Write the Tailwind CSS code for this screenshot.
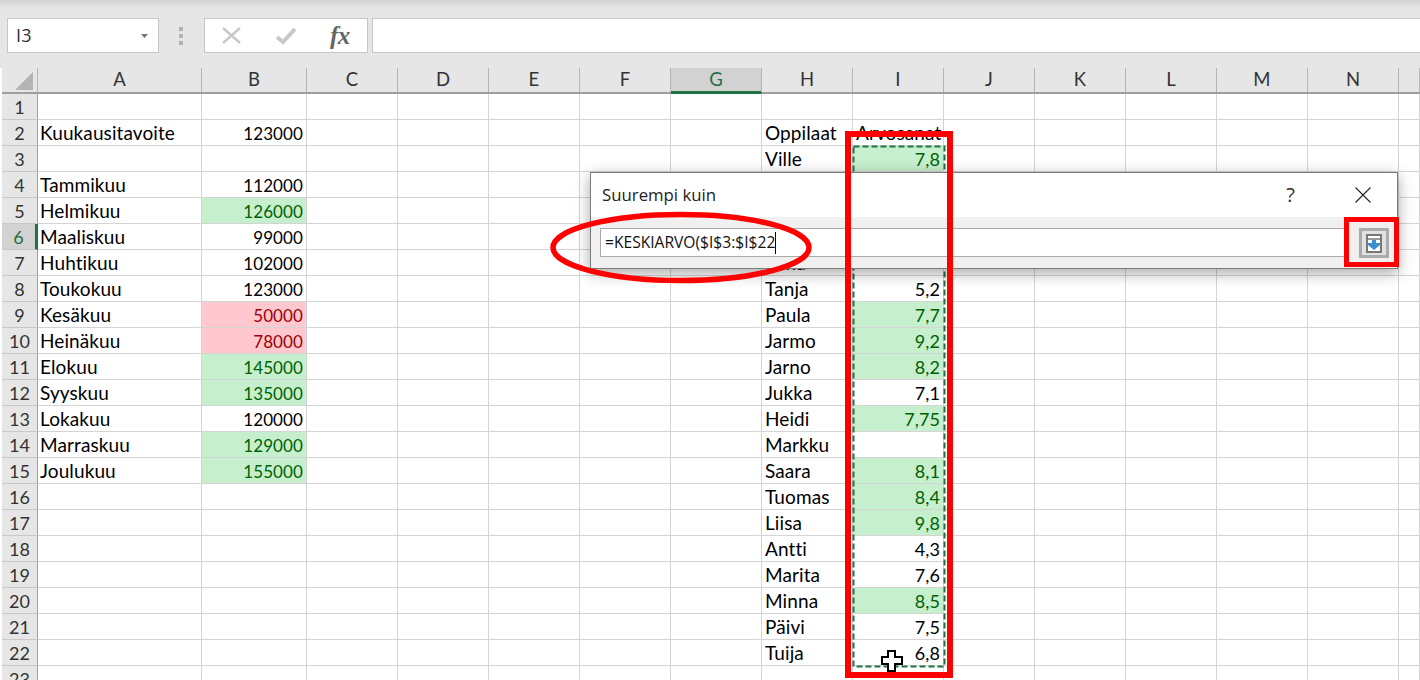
<!DOCTYPE html>
<html lang="fi">
  <head>
    <meta charset="UTF-8" />
    <title>Suurempi kuin</title>
    <script src="https://cdn.jsdelivr.net/npm/@tailwindcss/browser@4"></script>
  </head>
  <body class="bg-white overflow-hidden">
    <div class="relative w-[1420px] h-[680px] overflow-hidden font-['Lato',sans-serif] text-[19px] tracking-[0.1px] text-black">
      <!-- Formula bar -->
      <div class="h-[68px] bg-[#e6e6e6] bg-gradient-to-b from-[#d2d2d2] to-[#e6e6e6] to-[8px] pt-[18px] pl-[7px] flex items-start">
        <div class="w-[152px] h-[35px] bg-white border border-[#c6c6c6] flex items-center justify-between pl-2 pr-[9px] font-['Open_Sans',sans-serif] text-[18px] text-[#333]">
          <span>I3</span>
          <svg width="8" height="4" viewBox="0 0 8 4"><path d="M0 0h7L3.5 4z" fill="#777" /></svg>
        </div>
        <div class="w-[45px] h-[35px] flex flex-col items-center justify-center gap-[3px] pr-[2px]">
          <span class="w-[4px] h-[4px] bg-[#b2b2b2]"></span>
          <span class="w-[4px] h-[4px] bg-[#b2b2b2]"></span>
          <span class="w-[4px] h-[4px] bg-[#b2b2b2]"></span>
        </div>
        <div class="w-[164px] h-[35px] bg-white border border-[#c6c6c6] flex items-center pl-[17px]">
          <svg width="19" height="18" viewBox="0 0 19 18"><path d="M1 1l17 15M18 1L1 16" stroke="#c8c8c8" stroke-width="2.4" fill="none" /></svg>
          <svg class="ml-[35px]" width="20" height="18" viewBox="0 0 20 18"><path d="M1 10l6 5L19 2" stroke="#c8c8c8" stroke-width="4" fill="none" /></svg>
          <span class="ml-[34px] font-['Liberation_Serif',serif] italic font-bold text-[25px] leading-none text-[#666] tracking-tight">fx</span>
        </div>
        <div class="ml-[4px] flex-1 h-[35px] bg-white border border-[#c6c6c6] border-r-0"></div>
      </div>

      <!-- Sheet, rows come from the data below -->
      <div id="sheet" class="pl-[2px]"></div>

      <!-- Marching ants round I3:I22 -->
      <svg class="absolute left-[852px] top-[145px]" width="94" height="523" viewBox="0 0 94 523">
        <rect x="1.5" y="1.5" width="91" height="520" fill="none" stroke="#1f7244" stroke-width="2" stroke-dasharray="6 3" />
      </svg>

      <!-- Cell cursor -->
      <svg class="absolute left-[881px] top-[650px]" width="22" height="22" viewBox="0 0 22 22">
        <path d="M7 1h7v6h7v7h-7v7H7v-7H1V7h6z" fill="#fff" stroke="#000" stroke-width="2" />
      </svg>

      <!-- Dialog -->
      <div class="absolute left-[590px] top-[172px] w-[808px] h-[97px] bg-[#f0f0f0] border border-[#7b7b7b] shadow-[0_4px_14px_rgba(0,0,0,0.35)] flex flex-col font-['Open_Sans',sans-serif] tracking-normal">
        <div class="h-[44px] bg-white flex items-center pl-[11px] text-[16.8px] text-[#222]">
          <span>Suurempi kuin</span>
          <span class="ml-auto mr-[60px] text-[20px] text-[#333]">?</span>
          <svg class="mr-[26px]" width="16" height="16" viewBox="0 0 16 16"><path d="M0.5 0.5l15 15M15.5 0.5l-15 15" stroke="#222" stroke-width="1.1" fill="none" /></svg>
        </div>
        <div class="flex-1 flex items-start pt-[11px] pl-[9px]">
          <div class="w-[745px] h-[29px] bg-white border border-[#a9a9a9] flex items-center pl-[4px] text-[15.6px] text-[#111]">
            <span>=KESKIARVO($I$3:$I$22</span><span class="w-px h-[22px] bg-black"></span>
          </div>
          <div class="ml-[14px] w-[30px] h-[30px] bg-[#e2e2e2] border-[3px] border-[#ababab] flex items-center justify-center">
            <svg width="16" height="19" viewBox="0 0 16 19">
              <rect x="1" y="1" width="14" height="17" fill="#fff" stroke="#777" stroke-width="2" />
              <path d="M1 5h14" stroke="#777" stroke-width="1.5" />
              <path d="M6 6h4v3h4v2l-6 5-6-5V9h4z" fill="#3d8fd1" />
            </svg>
          </div>
        </div>
      </div>

      <!-- Red annotations -->
      <div class="absolute left-[845px] top-[131px] w-[108px] h-[547px] border-[6px] border-[#ff0000]"></div>
      <div class="absolute left-[1344px] top-[217px] w-[55px] h-[50px] border-[5px] border-[#ff0000]"></div>
      <svg class="absolute left-[545px] top-[205px]" width="275" height="85" viewBox="0 0 275 85">
        <ellipse cx="136" cy="42.5" rx="128" ry="33" fill="none" stroke="#ff0000" stroke-width="5.5" />
      </svg>
    </div>

    <script>
      const cols = ['A', 'B', 'C', 'D', 'E', 'F', 'G', 'H', 'I', 'J', 'K', 'L', 'M', 'N', ''];
      const widths = ['w-[164px]', 'w-[105px]', 'w-[91px]', 'w-[91px]', 'w-[91px]', 'w-[91px]', 'w-[91px]', 'w-[91px]', 'w-[91px]', 'w-[91px]', 'w-[91px]', 'w-[91px]', 'w-[91px]', 'w-[91px]', 'w-[21px]'];

      const g = 'bg-[#c6efce] text-[#006100]';
      const r = 'bg-[#ffc7ce] text-[#9c0006]';

      // row number -> [A, B, B style, H, I, I style]
      const data = {
        2: ['Kuukausitavoite', '123000', '', 'Oppilaat', '', ''],
        3: ['', '', '', 'Ville', '7,8', g],
        4: ['Tammikuu', '112000', '', '', '', ''],
        5: ['Helmikuu', '126000', g, '', '', ''],
        6: ['Maaliskuu', '99000', '', '', '', ''],
        7: ['Huhtikuu', '102000', '', 'Tiina', '', ''],
        8: ['Toukokuu', '123000', '', 'Tanja', '5,2', ''],
        9: ['Kesäkuu', '50000', r, 'Paula', '7,7', g],
        10: ['Heinäkuu', '78000', r, 'Jarmo', '9,2', g],
        11: ['Elokuu', '145000', g, 'Jarno', '8,2', g],
        12: ['Syyskuu', '135000', g, 'Jukka', '7,1', ''],
        13: ['Lokakuu', '120000', '', 'Heidi', '7,75', g],
        14: ['Marraskuu', '129000', g, 'Markku', '', ''],
        15: ['Joulukuu', '155000', g, 'Saara', '8,1', g],
        16: ['', '', '', 'Tuomas', '8,4', g],
        17: ['', '', '', 'Liisa', '9,8', g],
        18: ['', '', '', 'Antti', '4,3', ''],
        19: ['', '', '', 'Marita', '7,6', ''],
        20: ['', '', '', 'Minna', '8,5', g],
        21: ['', '', '', 'Päivi', '7,5', ''],
        22: ['', '', '', 'Tuija', '6,8', ''],
        23: ['', '', '', '', '', ''],
      };

      let html = '<div class="flex h-[26px] bg-[#e6e6e6] border-b-2 border-[#9f9f9f]">';
      html += '<div class="w-[36px] relative border-r border-[#b5b5b5]"><svg class="absolute left-[12px] top-[3px]" width="20" height="20" viewBox="0 0 20 20"><path d="M19 1v18H1z" fill="#b4b4b4" /></svg></div>';
      cols.forEach((c, i) => {
        const sel = c === 'G' ? 'bg-[#d2d2d2] border-b-[3px] border-b-[#217346] h-[26px] text-[#1f6f45]' : 'text-[#333]';
        html += `<div class="${widths[i]} ${sel} shrink-0 border-r border-[#b5b5b5] flex items-center justify-center text-[18.5px]">${c}</div>`;
      });
      html += '</div>';

      for (let n = 1; n <= 23; n++) {
        const d = data[n] || ['', '', '', '', '', ''];
        const sel = n === 6 ? 'bg-[#d2d2d2] border-r-[3px] border-r-[#217346] text-[#1f6f45]' : 'bg-[#e6e6e6] border-r border-[#9f9f9f] text-[#333]';
        html += `<div class="flex h-[26px] shrink-0"><div class="w-[36px] ${sel} shrink-0 border-b border-b-[#c8c8c8] flex items-center justify-center text-[18px] pt-[2px]">${n}</div>`;
        cols.forEach((c, i) => {
          let text = '', extra = 'pl-[3px]';
          if (c === 'A') { text = d[0]; extra = 'pl-[2px]'; }
          if (c === 'B') { text = d[1]; extra = 'justify-end text-[17px] ' + d[2]; }
          if (c === 'H') text = d[3];
          if (c === 'I') { text = d[4]; extra = 'justify-end text-[18px] ' + d[5]; }
          if (c === 'I' && n === 2) { text = 'Arvosanat'; extra = 'pl-[3px] text-[19px]'; }
          html += `<div class="${widths[i]} ${extra} shrink-0 border-r border-b border-[#d4d4d4] flex items-center pr-[3px] pt-[2px] whitespace-nowrap overflow-hidden">${text}</div>`;
        });
        html += '</div>';
      }
      document.getElementById('sheet').innerHTML = html;
    </script>
  </body>
</html>
